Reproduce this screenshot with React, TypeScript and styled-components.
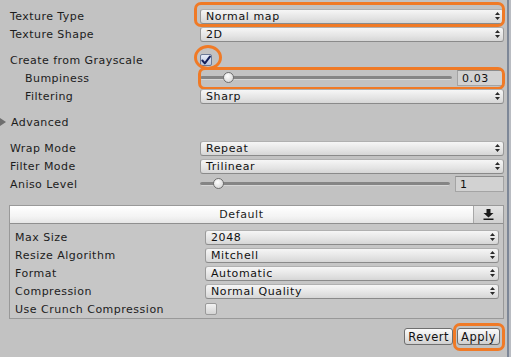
import React from "react";
import styled, { createGlobalStyle } from "styled-components";

const Global = createGlobalStyle`
  html, body { margin: 0; padding: 0; }
  body {
    background: #c2c2c2;
    font-family: "DejaVu Sans", "Liberation Sans", sans-serif;
    font-size: 11px;
    color: #1c1c1c;
    width: 511px;
    height: 357px;
    overflow: hidden;
  }
`;

const Window = styled.div`
  display: flex;
  width: 511px;
  height: 357px;
`;

const Inspector = styled.div`
  position: relative;
  flex: 0 0 507px;
  box-sizing: border-box;
  padding: 7px 3px 0 10px;
  display: flex;
  flex-direction: column;
`;

const EdgeBar = styled.div`
  flex: 0 0 2px;
  background: #7d8797;
`;

const EdgeRest = styled.div`
  flex: 1;
  background: #b9bcc2;
`;

const Row = styled.div<{ $indent?: boolean }>`
  display: flex;
  align-items: center;
  height: 18px;
  padding-left: ${(p) => (p.$indent ? "15px" : "0")};
`;

const Label = styled.div<{ $indent?: boolean }>`
  flex: 0 0 ${(p) => (p.$indent ? "175px" : "190px")};
  white-space: nowrap;
  letter-spacing: 0.45px;
`;

const Control = styled.div`
  position: relative;
  flex: 1;
  display: flex;
  align-items: center;
  height: 100%;
`;

const Spacer = styled.div<{ $h: number }>`
  flex: 0 0 ${(p) => p.$h}px;
`;

const Dropdown = styled.div`
  flex: 1;
  height: 15px;
  box-sizing: border-box;
  border: 1px solid #9a9a9a;
  border-top-color: #b0b0b0;
  border-bottom-color: #8a8a8a;
  border-radius: 3px;
  background: linear-gradient(#f6f6f6, #e4e4e4 60%, #d6d6d6);
  display: flex;
  align-items: center;
  justify-content: space-between;
  padding: 0 3px 0 5px;
  font-size: 11px;
  color: #111;
  letter-spacing: 0.6px;
`;

const Arrows = () => (
  <svg width="5" height="8" viewBox="0 0 5 8">
    <path d="M2.5 0 L5 3 L0 3 Z M2.5 8 L5 5 L0 5 Z" fill="#2a2a2a" />
  </svg>
);

const Select = ({ value }: { value: string }) => (
  <Dropdown>
    <span>{value}</span>
    <Arrows />
  </Dropdown>
);

const CheckBox = styled.div<{ $on?: boolean }>`
  width: 12px;
  height: 12px;
  box-sizing: border-box;
  border: 1px solid ${(p) => (p.$on ? "#6c7a96" : "#9a9a9a")};
  border-radius: 2px;
  background: ${(p) =>
    p.$on ? "linear-gradient(#e6ecf8, #b9c6e0)" : "linear-gradient(#f2f2f2, #d4d4d4)"};
  display: flex;
  align-items: center;
  justify-content: center;
`;

const SliderWrap = styled.div`
  position: relative;
  flex: 1;
  height: 16px;
  margin-right: 5px;
  display: flex;
  align-items: center;
`;

const Track = styled.div`
  flex: 1;
  height: 3px;
  border-radius: 2px;
  background: #858585;
  border-bottom: 1px solid #d6d6d6;
`;

const Thumb = styled.div`
  position: absolute;
  top: 2px;
  width: 11px;
  height: 11px;
  box-sizing: border-box;
  border-radius: 50%;
  border: 1px solid #6f6f6f;
  background: radial-gradient(circle at 40% 35%, #ffffff, #dcdcdc 70%, #bdbdbd);
`;

const NumberField = styled.div<{ $w: number }>`
  flex: 0 0 ${(p) => p.$w}px;
  height: 16px;
  box-sizing: border-box;
  border: 1px solid #a4a4a4;
  border-top-color: #8c8c8c;
  background: #d2d2d2;
  display: flex;
  align-items: center;
  padding-left: 4px;
  font-size: 11px;
  color: #111;
  letter-spacing: 0.6px;
`;

const Slider = ({ pos, value, w }: { pos: number; value: string; w: number }) => (
  <>
    <SliderWrap>
      <Track />
      <Thumb style={{ left: pos }} />
    </SliderWrap>
    <NumberField $w={w}>{value}</NumberField>
  </>
);

const Foldout = styled.div`
  display: flex;
  align-items: center;
  height: 18px;
  margin-left: -10px;
  gap: 5px;
  letter-spacing: 0.45px;
`;

const Tri = styled.div`
  width: 0;
  height: 0;
  border-top: 4px solid transparent;
  border-bottom: 4px solid transparent;
  border-left: 6px solid #6e6e6e;
`;

const Box = styled.div`
  margin-left: -1px;
  border: 1px solid #999;
  background: #c6c6c6;
  display: flex;
  flex-direction: column;
`;

const BoxHeader = styled.div`
  display: flex;
  height: 17px;
  border-bottom: 1px solid #8f8f8f;
  background: linear-gradient(#ffffff, #f4f4f4 60%, #e6e6e6);
`;

const HeaderTitle = styled.div`
  flex: 1;
  display: flex;
  align-items: center;
  justify-content: center;
  letter-spacing: 0.6px;
`;

const HeaderIcon = styled.div`
  flex: 0 0 29px;
  border-left: 1px solid #a8a8a8;
  background: linear-gradient(#e4e4e4, #d0d0d0);
  display: flex;
  align-items: center;
  justify-content: center;
`;

const BoxBody = styled.div`
  padding: 4px 4px 0 5px;
  display: flex;
  flex-direction: column;
`;

const BoxLabel = styled.div`
  flex: 0 0 190px;
  white-space: nowrap;
  letter-spacing: 0.5px;
`;

const Buttons = styled.div`
  display: flex;
  justify-content: flex-end;
  gap: 4px;
  margin-top: 9px;
  padding-right: 4px;
`;

const Button = styled.div`
  position: relative;
  height: 17px;
  box-sizing: border-box;
  padding: 0 3px;
  border: 1px solid #6f6f6f;
  border-radius: 3px;
  background: linear-gradient(#fafafa, #e4e4e4 60%, #cfcfcf);
  display: flex;
  align-items: center;
  font-size: 11.5px;
  letter-spacing: 0.5px;
  color: #111;
`;

const Ring = styled.div<{ $t: number; $l: number; $r: number; $b: number; $round?: boolean }>`
  position: absolute;
  top: ${(p) => p.$t}px;
  left: ${(p) => p.$l}px;
  right: ${(p) => p.$r}px;
  bottom: ${(p) => p.$b}px;
  border: 3px solid #f07a26;
  border-radius: ${(p) => (p.$round ? "50%" : "7px")};
  pointer-events: none;
`;

const Check = () => (
  <svg width="11" height="11" viewBox="0 0 11 11">
    <path d="M1.5 5.5 L4.2 8.6 L9.8 1.2" fill="none" stroke="#14205a" strokeWidth="2.2" strokeLinecap="round" strokeLinejoin="round" />
  </svg>
);

const DownloadIcon = () => (
  <svg width="11" height="11" viewBox="0 0 11 11">
    <rect x="3.5" y="0" width="4" height="4" fill="#1a1a1a" />
    <path d="M0.5 4 L10.5 4 L5.5 8.5 Z" fill="#1a1a1a" />
    <rect x="0.5" y="9.5" width="10" height="1.5" fill="#1a1a1a" />
  </svg>
);

export default function App() {
  return (
    <>
      <Global />
      <Window>
        <Inspector>
          <Row>
            <Label>Texture Type</Label>
            <Control>
              <Select value="Normal map" />
              <Ring $t={-5} $l={-6} $r={-1} $b={-2} />
            </Control>
          </Row>
          <Row>
            <Label>Texture Shape</Label>
            <Control>
              <Select value="2D" />
            </Control>
          </Row>
          <Spacer $h={8} />
          <Row>
            <Label>Create from Grayscale</Label>
            <Control>
              <CheckBox $on>
                <Check />
              </CheckBox>
              <Ring $t={-6} $l={-6} $r={282} $b={-1} $round />
            </Control>
          </Row>
          <Row $indent>
            <Label $indent>Bumpiness</Label>
            <Control>
              <Slider pos={23} value="0.03" w={47} />
              <Ring $t={-2} $l={-2} $r={-1} $b={-3} />
            </Control>
          </Row>
          <Row $indent>
            <Label $indent>Filtering</Label>
            <Control>
              <Select value="Sharp" />
            </Control>
          </Row>
          <Spacer $h={8} />
          <Foldout>
            <Tri />
            <span>Advanced</span>
          </Foldout>
          <Spacer $h={8} />
          <Row>
            <Label>Wrap Mode</Label>
            <Control>
              <Select value="Repeat" />
            </Control>
          </Row>
          <Row>
            <Label>Filter Mode</Label>
            <Control>
              <Select value="Trilinear" />
            </Control>
          </Row>
          <Row>
            <Label>Aniso Level</Label>
            <Control>
              <Slider pos={13} value="1" w={49} />
            </Control>
          </Row>
          <Spacer $h={12} />
          <Box>
            <BoxHeader>
              <HeaderTitle>Default</HeaderTitle>
              <HeaderIcon>
                <DownloadIcon />
              </HeaderIcon>
            </BoxHeader>
            <BoxBody>
              <Row>
                <BoxLabel>Max Size</BoxLabel>
                <Control>
                  <Select value="2048" />
                </Control>
              </Row>
              <Row>
                <BoxLabel>Resize Algorithm</BoxLabel>
                <Control>
                  <Select value="Mitchell" />
                </Control>
              </Row>
              <Row>
                <BoxLabel>Format</BoxLabel>
                <Control>
                  <Select value="Automatic" />
                </Control>
              </Row>
              <Row>
                <BoxLabel>Compression</BoxLabel>
                <Control>
                  <Select value="Normal Quality" />
                </Control>
              </Row>
              <Row>
                <BoxLabel>Use Crunch Compression</BoxLabel>
                <Control>
                  <CheckBox />
                </Control>
              </Row>
            </BoxBody>
          </Box>
          <Buttons>
            <Button>Revert</Button>
            <Button>
              Apply
              <Ring $t={-6} $l={-5} $r={-6} $b={-7} />
            </Button>
          </Buttons>
        </Inspector>
        <EdgeBar />
        <EdgeRest />
      </Window>
    </>
  );
}
